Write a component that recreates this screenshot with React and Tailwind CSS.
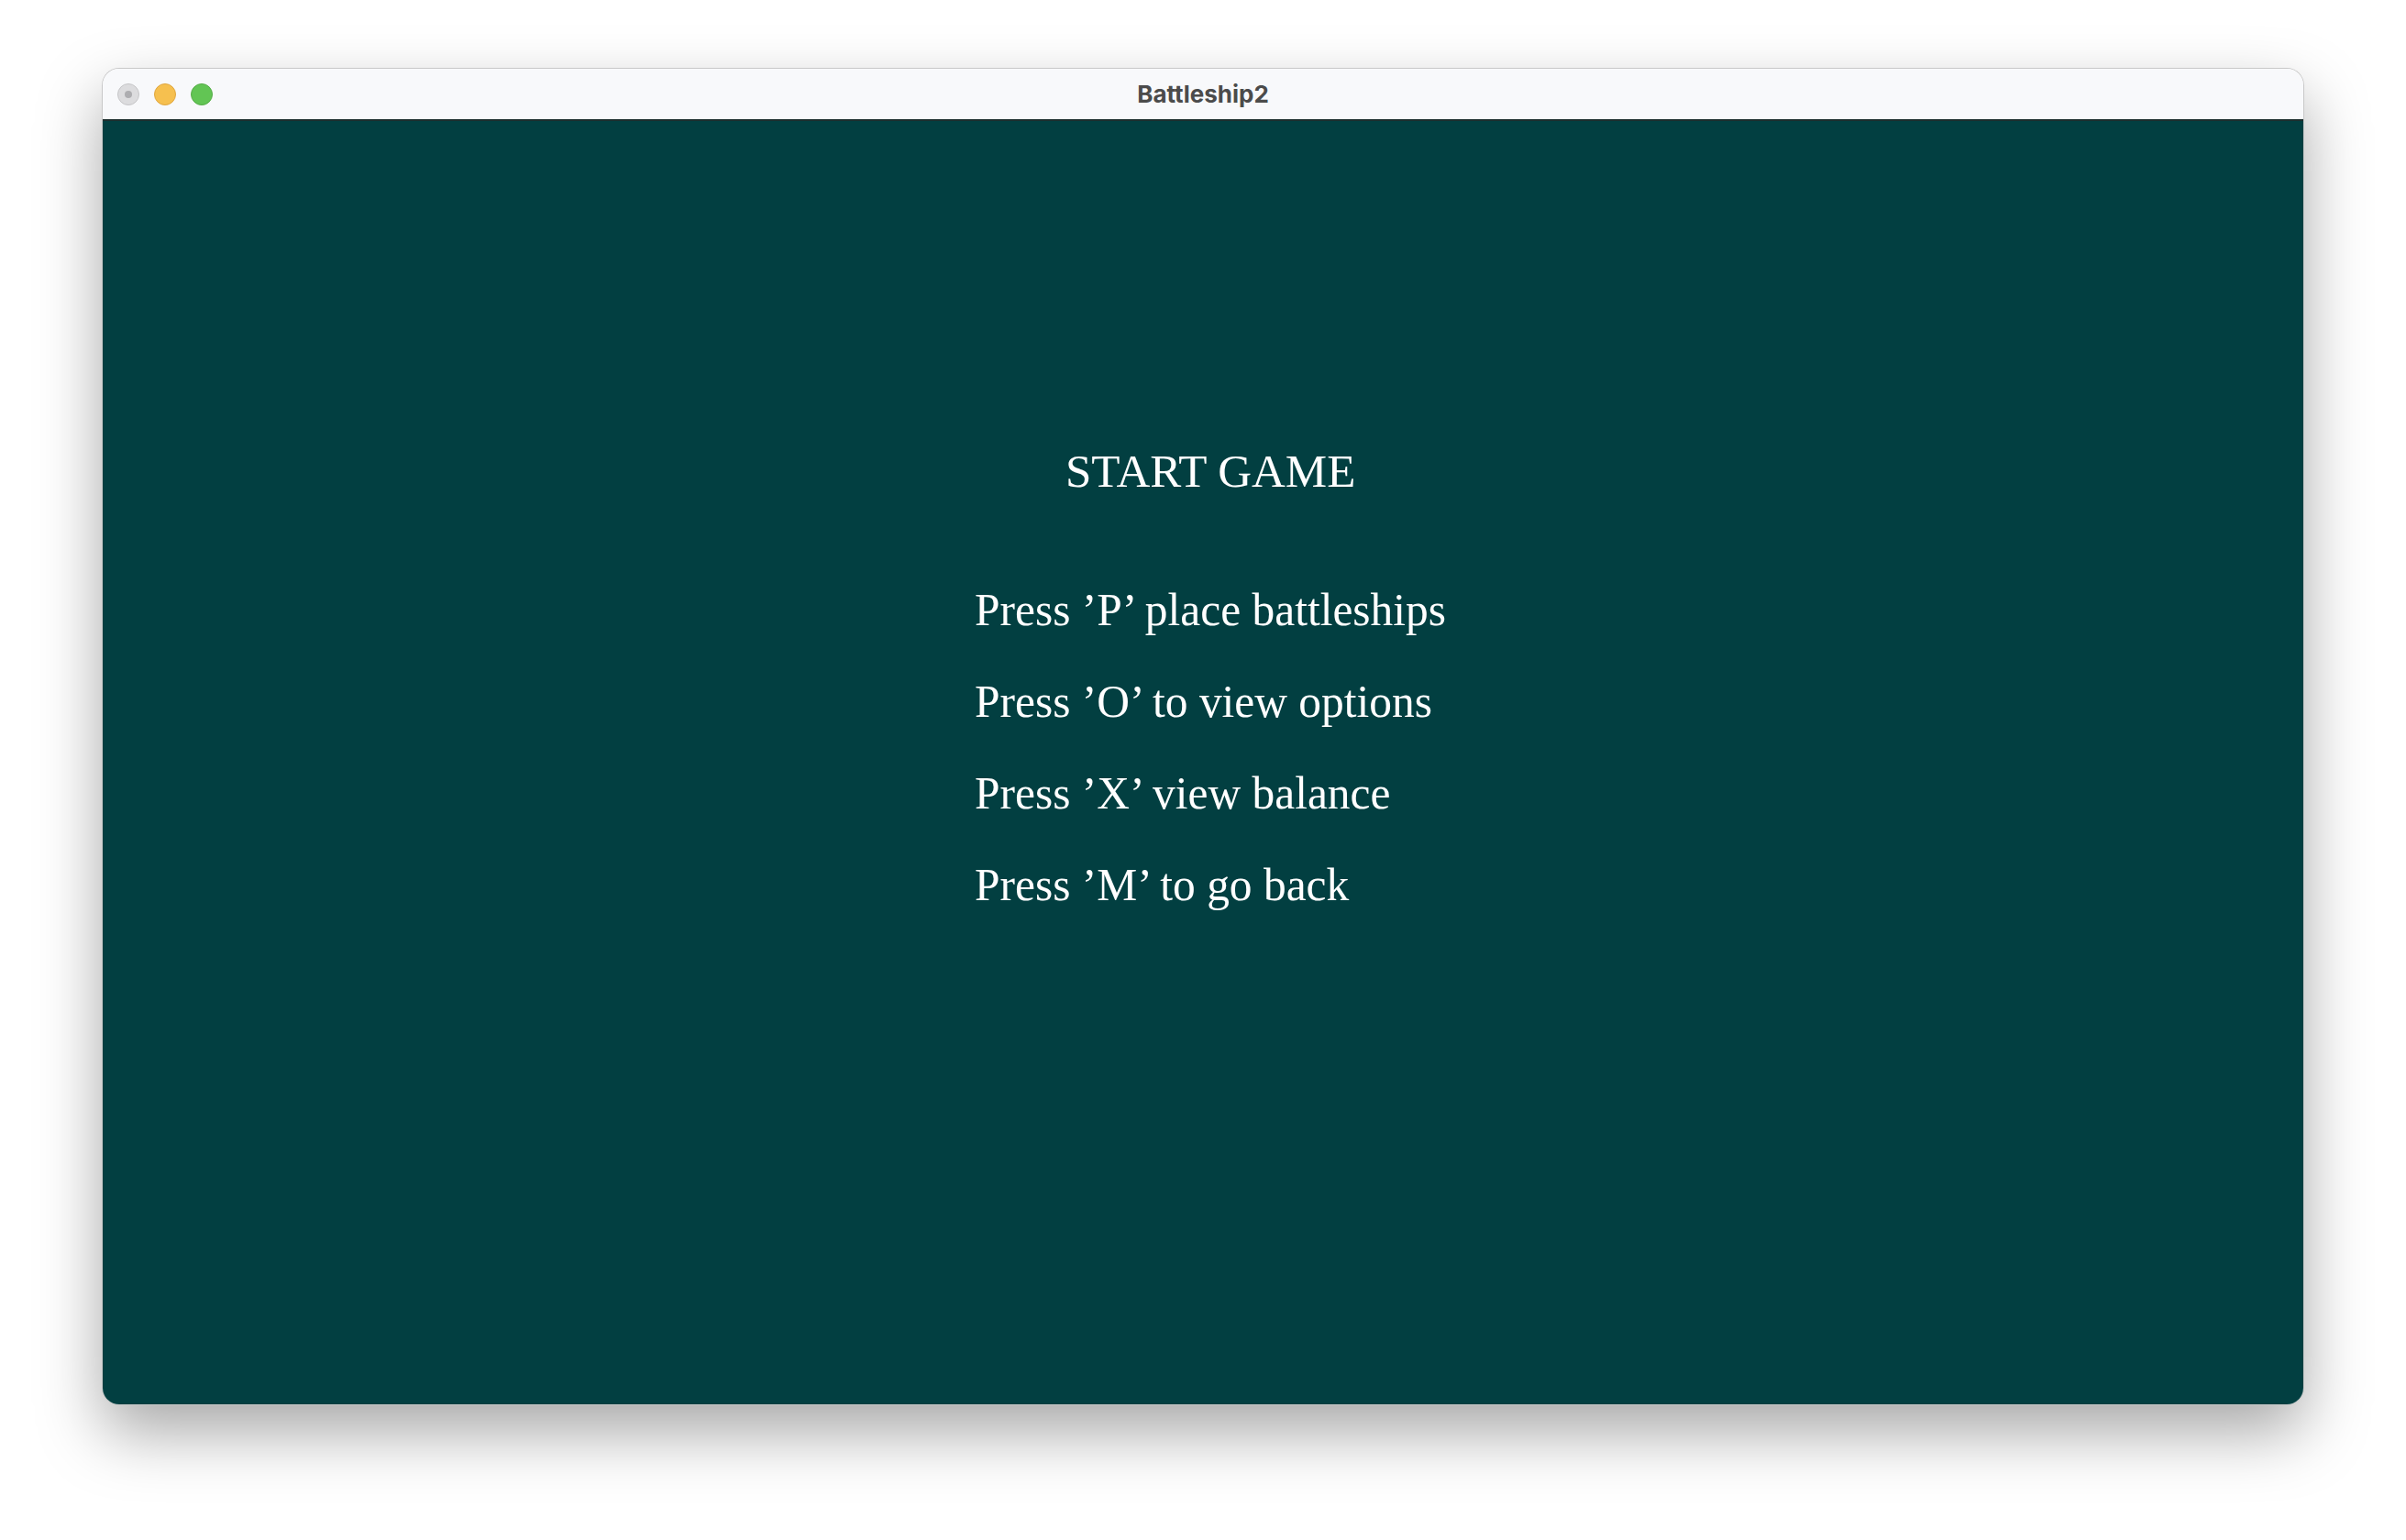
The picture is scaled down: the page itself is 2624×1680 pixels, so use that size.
export default function App() {
  const lines = [
    "Press \u2019P\u2019 place battleships",
    "Press \u2019O\u2019 to view options",
    "Press \u2019X\u2019 view balance",
    "Press \u2019M\u2019 to go back",
  ];
  return (
    <div className="w-[2624px] h-[1680px] bg-white flex flex-col pt-[75px] pl-[112px]">
      <div className="w-[2400px] h-[1457px] rounded-[18px] overflow-hidden flex flex-col shadow-[0_30px_70px_rgba(0,0,0,0.35)] ring-1 ring-[#c8c8c8]">
        <div className="h-[57px] shrink-0 bg-[#f8f9fb] border-b-2 border-[#1d2e2e] relative flex items-center">
          <div className="flex items-center gap-[16px] pl-[16px]">
            <div className="w-[24px] h-[24px] rounded-full bg-[#dcdcde] border border-[#c5c5c7] flex items-center justify-center">
              <div className="w-[8px] h-[8px] rounded-full bg-[#adadb0]" />
            </div>
            <div className="w-[24px] h-[24px] rounded-full bg-[#f6c04f] border border-[#dfa63f]" />
            <div className="w-[24px] h-[24px] rounded-full bg-[#62c554] border border-[#55ac48]" />
          </div>
          <div className="absolute inset-0 flex items-center justify-center text-[26px] font-bold text-[#4b4b4b] font-['Inter',sans-serif]">
            Battleship2
          </div>
        </div>
        <div className="flex-1 bg-[#023f41] flex flex-col font-['Liberation_Serif',serif] text-white">
          <div className="pt-[357px] pl-[1050px] text-[51px] leading-[51px] h-[408px]">
            <div className="whitespace-nowrap">START GAME</div>
          </div>
          <div className="pt-[75px] pl-[951px] flex flex-col">
            {lines.map((t) => (
              <div key={t} className="text-[51.5px] leading-[100px] h-[100px] whitespace-nowrap origin-left scale-x-[0.96]">
                {t}
              </div>
            ))}
          </div>
        </div>
      </div>
    </div>
  );
}
